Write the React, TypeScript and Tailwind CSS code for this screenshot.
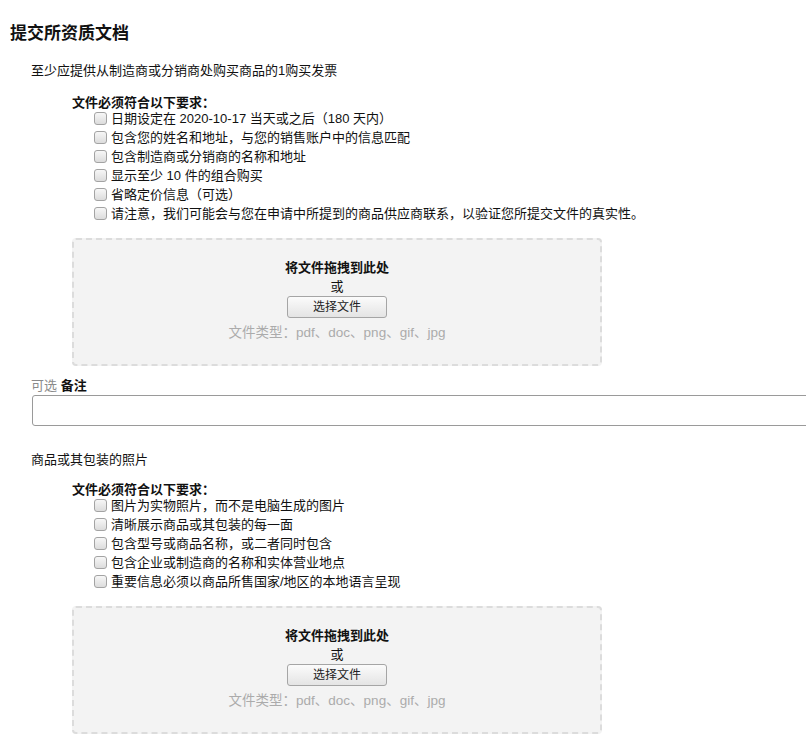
import React from "react";

const FONT = {
  fontFamily: '"Liberation Sans", "Noto Sans CJK SC", Arial, sans-serif',
};

function Box() {
  return (
    <span className="inline-block w-[13px] h-[13px] shrink-0 rounded-[3px] border border-[#a3a3a3] bg-gradient-to-b from-[#f7f7f7] to-[#dcdcdc]" />
  );
}

function Requirements({ items, headMt }: { items: string[]; headMt: string }) {
  return (
    <div className="pl-[41px]">
      <div className={`${headMt} font-bold leading-[13px]`}>文件必须符合以下要求：</div>
      <ul className="pl-[22px]">
        {items.map((t) => (
          <li key={t} className="flex items-center gap-[4px] leading-[19px]">
            <Box />
            <span>{t}</span>
          </li>
        ))}
      </ul>
    </div>
  );
}

function DropZone() {
  return (
    <div className="ml-[41px] mt-[15px] w-[530px] h-[128px] rounded-[4px] border-2 border-dashed border-[#dcdcdc] bg-[#f3f3f3] flex flex-col items-center pt-[18px]">
      <div className="font-bold text-[13px] leading-[19px]">将文件拖拽到此处</div>
      <div className="leading-[19px]">或</div>
      <button className="w-[100px] h-[22px] rounded-[3px] border border-[#a5a5a5] bg-gradient-to-b from-[#fbfbfb] to-[#e4e4e4] text-[12px] leading-[20px] text-[#222]">
        选择文件
      </button>
      <div className="mt-[5px] text-[13.5px] leading-[19px] text-[#ababab]">
        文件类型：pdf、doc、png、gif、jpg
      </div>
    </div>
  );
}

export default function App() {
  const first = [
    "日期设定在 2020-10-17 当天或之后（180 天内）",
    "包含您的姓名和地址，与您的销售账户中的信息匹配",
    "包含制造商或分销商的名称和地址",
    "显示至少 10 件的组合购买",
    "省略定价信息（可选）",
    "请注意，我们可能会与您在申请中所提到的商品供应商联系，以验证您所提交文件的真实性。",
  ];
  const second = [
    "图片为实物照片，而不是电脑生成的图片",
    "清晰展示商品或其包装的每一面",
    "包含型号或商品名称，或二者同时包含",
    "包含企业或制造商的名称和实体营业地点",
    "重要信息必须以商品所售国家/地区的本地语言呈现",
  ];
  return (
    <div
      style={FONT}
      className="w-[806px] h-[741px] overflow-hidden bg-white text-[13px] text-[#111] pl-[10px]"
    >
      <h2 className="pt-[22px] text-[17px] leading-[24px] font-bold text-[#111]">提交所资质文档</h2>
      <div className="pl-[21px]">
        <p className="mt-[15px] leading-[19px]">至少应提供从制造商或分销商处购买商品的1购买发票</p>
      </div>
      <div className="pl-[21px]">
        <Requirements items={first} headMt="mt-[16px]" />
        <DropZone />
        <div className="mt-[10px] leading-[19px]">
          <span className="text-[#8a8a8a]">可选</span> <span className="font-bold">备注</span>
        </div>
        <input
          type="text"
          className="block ml-[1px] w-[800px] h-[31px] rounded-[3px] border border-[#9a9a9a] bg-white outline-none"
        />
        <p className="mt-[24px] leading-[19px]">商品或其包装的照片</p>
        <Requirements items={second} headMt="mt-[14px]" />
        <DropZone />
      </div>
    </div>
  );
}
